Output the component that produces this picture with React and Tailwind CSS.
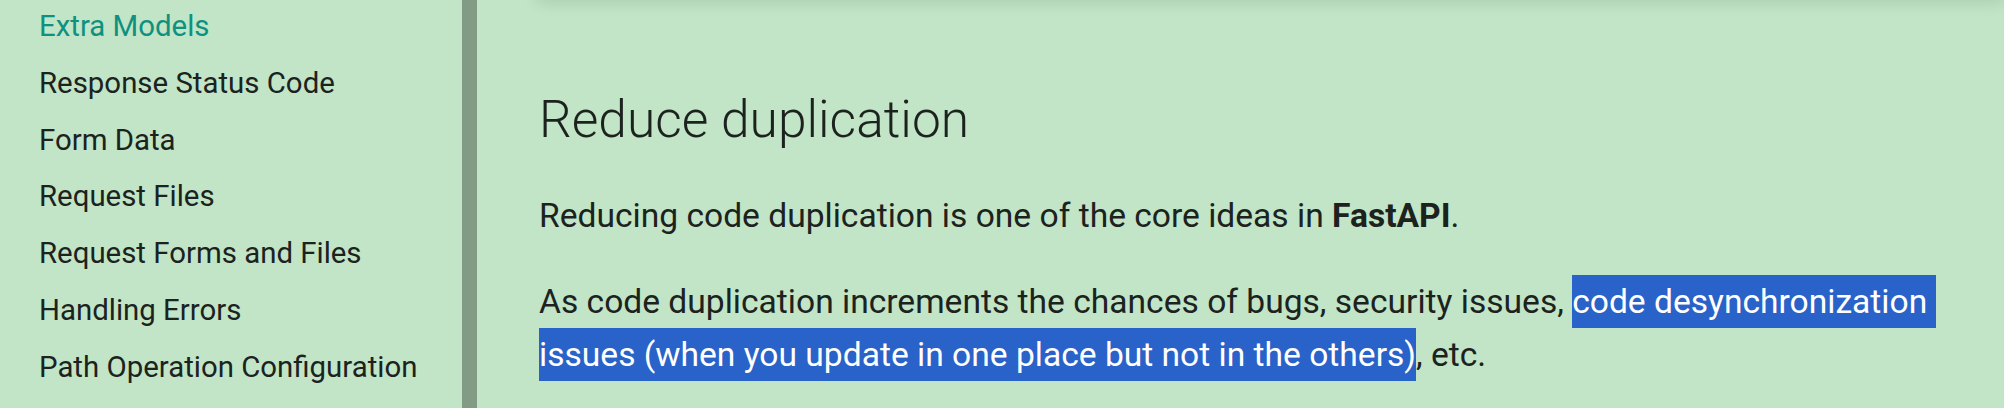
import React from "react";

const navItems = [
  { label: "Extra Models", active: true },
  { label: "Response Status Code" },
  { label: "Form Data" },
  { label: "Request Files" },
  { label: "Request Forms and Files" },
  { label: "Handling Errors" },
  { label: "Path Operation Configuration" },
];

function Sidebar() {
  return (
    <nav className="flex h-full w-[462px] shrink-0">
      <ul className="mt-[-2px] flex flex-col pl-[39px]">
        {navItems.map((item) => (
          <li
            key={item.label}
            className={
              "whitespace-nowrap text-[29.4px] leading-[56.8px] " +
              (item.active ? "text-[#0f9080]" : "text-[#1c221e]")
            }
          >
            {item.label}
          </li>
        ))}
      </ul>
    </nav>
  );
}

export default function App() {
  return (
    <div
      className="flex h-[408px] w-[2004px] overflow-hidden bg-[#c1e5c6]"
      style={{ fontFamily: "Roboto, 'Noto Sans', sans-serif" }}
    >
      <Sidebar />
      {/* scrollbar thumb of the sidebar */}
      <div className="h-full w-[15px] shrink-0 bg-[#819b84]" />

      <main className="relative flex-1 overflow-hidden pl-[62px] pr-[30px] pt-[82px] text-[#1c221e]">
        {/* header shadow */}
        <div className="absolute left-[60px] right-0 top-[-20px] h-[20px] shadow-[0_2px_16px_rgba(0,0,0,0.12)]" />

        <h2 className="mb-[32px] text-[51.5px] font-light leading-[75px]">
          Reduce duplication
        </h2>
        <p className="mb-[33px] text-[33.6px] leading-[53px]">
          Reducing code duplication is one of the core ideas in{" "}
          <strong className="font-bold">FastAPI</strong>.
        </p>
        <p className="text-[33.6px] leading-[53px]">
          As code duplication increments the chances of bugs, security issues,{" "}
          <span className="bg-[#2962c8] py-[7px] text-white [box-decoration-break:clone]">
            code desynchronization{"\u00a0"}
            <wbr />
            issues (when you update in one place but not in the others)
          </span>
          , etc.
        </p>
      </main>
    </div>
  );
}
